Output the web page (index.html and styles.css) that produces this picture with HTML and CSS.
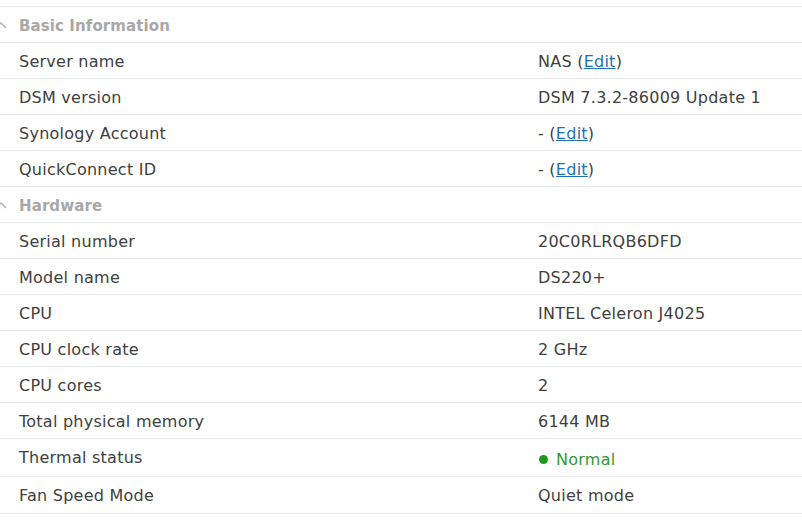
FILE: index.html
```html
<!DOCTYPE html>
<html lang="en">
<head>
<meta charset="utf-8">
<title>Info Center</title>
<link rel="stylesheet" href="styles.css">
</head>
<body>
<div class="list">
  <div class="row head">
    <svg class="chev" width="19" height="35" viewBox="0 0 19 35"><polyline points="-4,20 1,15 6,20" fill="none" stroke="#b4b4b4" stroke-width="1.5"/></svg>
    <span>Basic Information</span>
  </div>
  <div class="row"><span class="label">Server name</span><span class="value">NAS (<a href="#">Edit</a>)</span></div>
  <div class="row"><span class="label">DSM version</span><span class="value">DSM 7.3.2-86009 Update 1</span></div>
  <div class="row"><span class="label">Synology Account</span><span class="value">- (<a href="#">Edit</a>)</span></div>
  <div class="row"><span class="label">QuickConnect ID</span><span class="value">- (<a href="#">Edit</a>)</span></div>
  <div class="row head">
    <svg class="chev" width="19" height="35" viewBox="0 0 19 35"><polyline points="-4,20 1,15 6,20" fill="none" stroke="#b4b4b4" stroke-width="1.5"/></svg>
    <span>Hardware</span>
  </div>
  <div class="row"><span class="label">Serial number</span><span class="value">20C0RLRQB6DFD</span></div>
  <div class="row"><span class="label">Model name</span><span class="value">DS220+</span></div>
  <div class="row"><span class="label">CPU</span><span class="value">INTEL Celeron J4025</span></div>
  <div class="row"><span class="label">CPU clock rate</span><span class="value">2 GHz</span></div>
  <div class="row"><span class="label">CPU cores</span><span class="value">2</span></div>
  <div class="row"><span class="label">Total physical memory</span><span class="value">6144 MB</span></div>
  <div class="row tall"><span class="label">Thermal status</span><span class="value ok"><span class="dot"></span>Normal</span></div>
  <div class="row mid"><span class="label">Fan Speed Mode</span><span class="value">Quiet mode</span></div>
  <div class="row head">
    <svg class="chev" width="19" height="35" viewBox="0 0 19 35"><polyline points="-4,20 1,15 6,20" fill="none" stroke="#b4b4b4" stroke-width="1.5"/></svg>
    <span>Time</span>
  </div>
</div>
</body>
</html>
```
FILE: styles.css
```css
html, body {
  margin: 0;
  padding: 0;
  background: #ffffff;
  overflow: hidden;
  height: 526px;
}
body {
  font-family: "DejaVu Sans", Verdana, sans-serif;
  font-size: 16px;
  letter-spacing: 0.25px;
  color: #404040;
}
.list {
  margin-top: 6px;
  border-top: 1px solid #e8ebee;
}
.row {
  display: grid;
  grid-template-columns: 519px 1fr;
  align-items: center;
  box-sizing: border-box;
  height: 36px;
  padding-top: 2px;
  border-bottom: 1px solid #e8ebee;
  padding-left: 19px;
  white-space: nowrap;
}
.row.tall {
  height: 38px;
  padding-top: 0;
}
.row.mid {
  height: 37px;
  padding-top: 1px;
}
.row.head {
  display: flex;
  padding-left: 0;
  font-size: 15px;
  font-weight: bold;
  letter-spacing: 0.1px;
  color: #a8a8a8;
}
.chev {
  display: block;
  flex: none;
}
.value a {
  color: #1e72b4;
  text-decoration: underline;
}
.value.ok {
  color: #2f9a2f;
  display: flex;
  align-items: center;
  padding-top: 4px;
}
.dot {
  width: 9px;
  height: 9px;
  border-radius: 50%;
  background: #1a9a1a;
  margin-right: 8px;
  margin-left: 1px;
}
```
